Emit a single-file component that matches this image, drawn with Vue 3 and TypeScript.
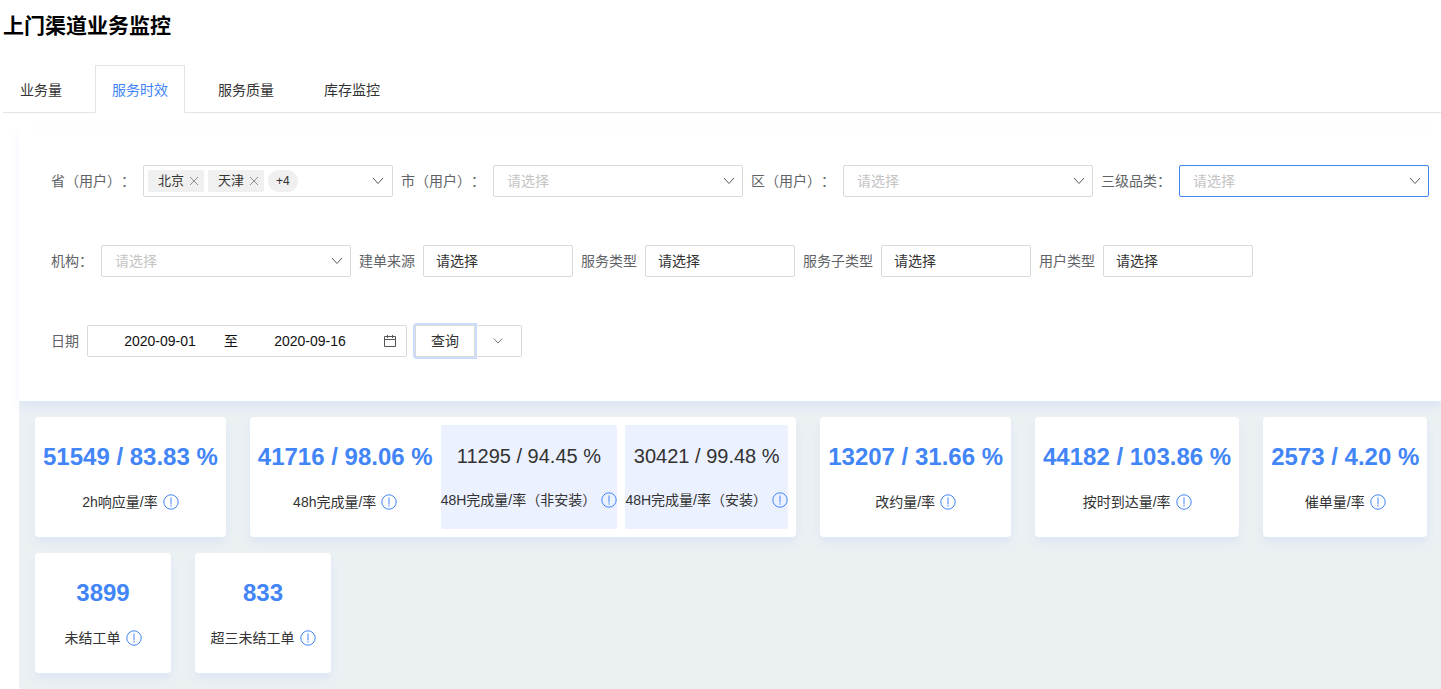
<script setup lang="ts">
import { ref } from 'vue'

interface Metric {
  value: string
  label: string
  parts?: Metric[]
}

const tabs = ['业务量', '服务时效', '服务质量', '库存监控']
const activeTab = ref('服务时效')

const provinces = ref(['北京', '天津'])
const removeProvince = (name: string) => {
  provinces.value = provinces.value.filter((p) => p !== name)
}

const selects = ref([
  { id: 'city', label: '市（用户）：', active: false },
  { id: 'district', label: '区（用户）：', active: false },
  { id: 'category', label: '三级品类：', active: true },
  { id: 'org', label: '机构：', active: false },
])

const inputs = ref([
  { id: 'source', label: '建单来源', value: '请选择' },
  { id: 'service', label: '服务类型', value: '请选择' },
  { id: 'subservice', label: '服务子类型', value: '请选择' },
  { id: 'usertype', label: '用户类型', value: '请选择' },
])

const startDate = ref('2020-09-01')
const endDate = ref('2020-09-16')

const metrics: Metric[] = [
  { value: '51549 / 83.83 %', label: '2h响应量/率' },
  {
    value: '41716 / 98.06 %',
    label: '48h完成量/率',
    parts: [
      { value: '11295 / 94.45 %', label: '48H完成量/率（非安装）' },
      { value: '30421 / 99.48 %', label: '48H完成量/率（安装）' },
    ],
  },
  { value: '13207 / 31.66 %', label: '改约量/率' },
  { value: '44182 / 103.86 %', label: '按时到达量/率' },
  { value: '2573 / 4.20 %', label: '催单量/率' },
  { value: '3899', label: '未结工单' },
  { value: '833', label: '超三未结工单' },
]
</script>

<template>
  <main class="page">
    <h1 class="title">上门渠道业务监控</h1>

    <nav class="tabs" role="tablist">
      <button
        v-for="tab in tabs"
        :key="tab"
        type="button"
        role="tab"
        class="tab"
        :class="{ 'tab-active': tab === activeTab }"
        :aria-selected="tab === activeTab"
        @click="activeTab = tab"
      >{{ tab }}</button>
    </nav>

    <div class="content">
      <form class="filters" @submit.prevent>
        <div class="field">
          <span id="province-label" class="label">省（用户）：</span>
          <div class="box tags" role="group" aria-labelledby="province-label">
            <span v-for="p in provinces" :key="p" class="tag">
              {{ p }}
              <button type="button" class="tag-close" :aria-label="'移除' + p" @click="removeProvince(p)">
                <svg width="10" height="10" viewBox="0 0 10 10"><path d="M1 1l8 8M9 1l-8 8" /></svg>
              </button>
            </span>
            <span class="more">+4</span>
            <svg class="chevron" width="12" height="12" viewBox="0 0 12 12"><path d="M1 3l5 5.5 5-5.5" /></svg>
          </div>
        </div>

        <div v-for="s in selects" :key="s.id" class="field">
          <label class="label" :for="s.id">{{ s.label }}</label>
          <div class="select-wrap">
            <select :id="s.id" class="box select" :class="{ 'select-active': s.active }">
              <option value="">请选择</option>
            </select>
            <svg class="chevron" width="12" height="12" viewBox="0 0 12 12"><path d="M1 3l5 5.5 5-5.5" /></svg>
          </div>
        </div>

        <div v-for="i in inputs" :key="i.id" class="field">
          <label class="label" :for="i.id">{{ i.label }}</label>
          <input :id="i.id" v-model="i.value" type="text" class="box input" />
        </div>

        <div class="field">
          <label class="label" for="start-date">日期</label>
          <div class="box range">
            <input id="start-date" v-model="startDate" type="text" class="date" />
            <span class="to">至</span>
            <input v-model="endDate" type="text" class="date date-end" aria-label="结束日期" />
            <svg class="calendar" width="16" height="16" viewBox="0 0 16 16">
              <path d="M2.5 3.5h11v10h-11zM2.5 6.5h11M5.5 2v3M10.5 2v3" />
            </svg>
          </div>
        </div>

        <div class="buttons">
          <button type="submit" class="btn btn-query">查询</button>
          <button type="button" class="btn btn-more" aria-label="更多">
            <svg width="10" height="10" viewBox="0 0 12 12"><path d="M1 3l5 5.5 5-5.5" /></svg>
          </button>
        </div>
      </form>

      <section class="cards">
        <article v-for="m in metrics" :key="m.label" class="card">
          <div class="metric">
            <strong class="value">{{ m.value }}</strong>
            <span class="caption">
              {{ m.label }}
              <svg class="info" width="16" height="16" viewBox="0 0 16 16">
                <circle cx="8" cy="8" r="7.2" /><path d="M8 3.5v7M8 11.2v1.4" />
              </svg>
            </span>
          </div>
          <div v-for="p in m.parts" :key="p.label" class="metric part">
            <span class="part-value">{{ p.value }}</span>
            <span class="caption">
              {{ p.label }}
              <svg class="info" width="16" height="16" viewBox="0 0 16 16">
                <circle cx="8" cy="8" r="7.2" /><path d="M8 3.5v7M8 11.2v1.4" />
              </svg>
            </span>
          </div>
        </article>
      </section>
    </div>
  </main>
</template>

<style>
body {
  margin: 0;
  background: #fff;
  overflow-x: hidden;
}
</style>

<style scoped>
.page {
  padding-left: 3px;
  font-family: "Liberation Sans", Arial, "Noto Sans CJK SC", sans-serif;
  font-size: 14px;
  line-height: 22px;
  color: #333;
  text-spacing-trim: space-all;
}
.page *,
.page *::before {
  box-sizing: border-box;
}
button,
input,
select {
  font: inherit;
  color: inherit;
  margin: 0;
}
svg {
  display: block;
  flex: none;
  fill: none;
  stroke: #555;
}
.title {
  margin: 0 0 13px;
  font-size: 21px;
  line-height: 52px;
  color: #000;
}
.tabs {
  display: flex;
  gap: 16px;
  height: 48px;
  border-bottom: 1px solid #e4e4e4;
}
.tab {
  height: 48px;
  padding: 2px 16px 0;
  border: 1px solid transparent;
  background: none;
}
.tab-active {
  border-color: #e4e4e4;
  border-bottom-color: #fff;
  background: #fff;
  color: #4285f7;
}
.content {
  margin: 16px 0 0 16px;
}
.filters {
  position: relative;
  display: flex;
  flex-wrap: wrap;
  gap: 48px 8px;
  padding: 36px 8px 44px 32px;
  background: #fff;
  box-shadow: 0 6px 10px rgba(66, 120, 245, 0.08);
}
.field {
  display: flex;
  align-items: center;
  gap: 8px;
}
.label {
  color: #606266;
  white-space: nowrap;
}
.box {
  height: 32px;
  border: 1px solid #d9d9d9;
  border-radius: 2px;
  background: #fff;
}
.select-wrap {
  position: relative;
}
.select {
  display: block;
  width: 250px;
  padding: 0 32px 0 13px;
  color: #c4c4c4;
  appearance: none;
}
.select-active {
  border-color: #4285f7;
}
.chevron {
  position: absolute;
  top: 10px;
  right: 8px;
  pointer-events: none;
}
.tags {
  position: relative;
  display: flex;
  align-items: center;
  gap: 4px;
  width: 250px;
  padding: 0 4px;
  font-size: 13px;
}
.tags .chevron {
  top: 9px;
}
.tag {
  display: flex;
  align-items: center;
  gap: 5px;
  padding: 0 5px 0 10px;
  border-radius: 2px;
  background: #f0f0f0;
}
.tag-close {
  padding: 0;
  border: 0;
  background: none;
}
.tag-close svg {
  stroke: #909090;
}
.more {
  padding: 0 8px;
  border-radius: 11px;
  background: #f0f0f0;
  font-size: 12px;
}
.input {
  width: 150px;
  padding: 0 12px 2px;
}
.range {
  display: flex;
  align-items: center;
  width: 320px;
  padding: 0 8px;
  color: #111;
}
.date {
  flex: none;
  width: 128px;
  height: 22px;
  padding: 0;
  border: 0;
  background: none;
  text-align: center;
}
.date-end {
  flex: 1;
  min-width: 0;
}
.buttons {
  display: flex;
}
.btn {
  height: 32px;
  border: 1px solid #d9d9d9;
  background: #fff;
}
.btn-query {
  position: relative;
  padding: 0 15px;
  border-radius: 2px 0 0 2px;
  box-shadow: 0 0 0 2px #cddcfb;
}
.btn-more {
  display: flex;
  align-items: center;
  padding: 0 18px;
  border-left: 0;
  border-radius: 0 2px 2px 0;
}
.cards {
  display: flex;
  flex-wrap: wrap;
  gap: 16px 24px;
  padding: 16px 12px 16px 16px;
  background: #ebf0f3;
}
.card {
  display: flex;
  gap: 8px;
  padding: 8px;
  border-radius: 4px;
  background: #fff;
  box-shadow: 0 6px 10px rgba(66, 120, 245, 0.07);
}
.metric {
  display: flex;
  flex-direction: column;
  align-items: center;
  gap: 18px;
  min-width: 120px;
  padding: 16px 0;
}
.value {
  font-size: 24px;
  line-height: 32px;
  color: #4285f7;
  white-space: nowrap;
}
.caption {
  display: flex;
  align-items: center;
  gap: 5px;
  white-space: nowrap;
}
.info {
  stroke: #4285f7;
}
.part {
  min-width: 163px;
  border-radius: 2px;
  background: #ebf1fe;
}
.part-value {
  font-size: 20px;
  line-height: 30px;
}
</style>
